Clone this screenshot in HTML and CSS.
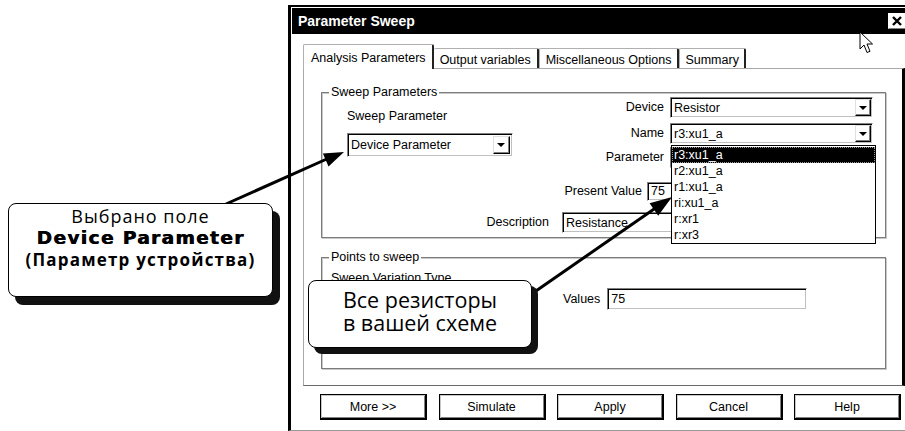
FILE: index.html
```html
<!DOCTYPE html>
<html lang="ru">
<head>
    <meta charset="UTF-8">
    <meta name="viewport" content="width=device-width, initial-scale=1.0">
    <title>Parameter Sweep</title>
    <link rel="stylesheet" href="styles.css">
</head>
<body>
<div class="page">
    <div class="dialog">
        <div class="titlebar">
            <span class="title">Parameter Sweep</span>
            <span class="close">
                <svg width="12" height="10" viewBox="0 0 12 10"><path d="M2 1 L10 9 M10 1 L2 9" stroke="#000" stroke-width="2.4"/></svg>
            </span>
        </div>

        <div class="tabs">
            <div class="tab active">Analysis Parameters</div>
            <div class="tab">Output variables</div>
            <div class="tab">Miscellaneous Options</div>
            <div class="tab summary">Summary</div>
        </div>

        <div class="panel">
            <div class="group sweep">
                <div class="legend">Sweep Parameters</div>
                <div class="sweep-top">
                    <div class="sweep-left">
                        <div class="caption">Sweep Parameter</div>
                        <div class="combo big"><span class="value">Device Parameter</span><span class="drop"></span></div>
                    </div>
                    <div class="sweep-right">
                        <div class="row r-device">
                            <span class="lbl">Device</span>
                            <div class="combo field"><span class="value">Resistor</span><span class="drop"></span></div>
                        </div>
                        <div class="row r-name">
                            <span class="lbl">Name</span>
                            <div class="combo field"><span class="value">r3:xu1_a</span><span class="drop"></span></div>
                        </div>
                        <div class="row r-param">
                            <span class="lbl">Parameter</span>
                            <div class="combo field"><span class="value"></span><span class="drop"></span></div>
                        </div>
                        <div class="row r-pv">
                            <span class="lbl">Present Value</span>
                            <div class="input pv">75</div>
                        </div>
                    </div>
                </div>
                <div class="row r-desc">
                    <span class="lbl">Description</span>
                    <div class="input desc">Resistance</div>
                </div>
            </div>

            <div class="group points">
                <div class="legend">Points to sweep</div>
                <div class="points-body">
                    <div class="pts-left">Sweep Variation Type</div>
                    <div class="row pts-values">
                        <span class="lbl">Values</span>
                        <div class="input values">75</div>
                    </div>
                </div>
            </div>
        </div>

        <div class="buttons">
            <div class="btn">More &gt;&gt;</div>
            <div class="btn">Simulate</div>
            <div class="btn">Apply</div>
            <div class="btn">Cancel</div>
            <div class="btn">Help</div>
        </div>
    </div>

    <!-- open list of the Name combo -->
    <ul class="droplist">
        <li class="selected">r3:xu1_a</li>
        <li>r2:xu1_a</li>
        <li>r1:xu1_a</li>
        <li>ri:xu1_a</li>
        <li>r:xr1</li>
        <li>r:xr3</li>
    </ul>

    <svg class="arrows" width="905" height="431" viewBox="0 0 905 431">
        <line x1="226" y1="204" x2="329" y2="158" stroke="#000" stroke-width="3"/>
        <polygon points="344,152 322.9,153.6 328.5,166.4" fill="#000"/>
        <line x1="533" y1="293" x2="657" y2="207" stroke="#000" stroke-width="3"/>
        <polygon points="672,197 649.6,203.3 658.2,215.7" fill="#000"/>
    </svg>

    <svg class="cursor" width="15" height="24" viewBox="0 0 15 24">
        <path d="M1 1 V18 L5 14 L8 21.5 L11 20.3 L8 13 H13.5 Z" fill="#fff" stroke="#000" stroke-width="1" stroke-linejoin="miter"/>
    </svg>

    <div class="callout callout-device">
        <div class="c-plain">Выбрано поле</div>
        <div class="c-heavy">Device Parameter</div>
        <div class="c-bold">(Параметр устройства)</div>
    </div>

    <div class="callout callout-res">
        <div>Все резисторы</div>
        <div>в вашей схеме</div>
    </div>
</div>
</body>
</html>
```

FILE: styles.css
```css
* {
    margin: 0;
    padding: 0;
    box-sizing: border-box;
}

body {
    background: #fff;
    font-family: "Liberation Sans", Arial, sans-serif;
    font-size: 12.5px;
    color: #000;
}

.page {
    position: relative;
    width: 905px;
    height: 431px;
    overflow: hidden;
    background: #fff;
}

/* janela do dialogo */
.dialog {
    margin: 5px 0 0 288px;
    width: 620px;
    height: 426px;
    border-left: 3px solid #000;
    border-top: 2px solid #000;
    border-bottom: 1px solid #999;
    padding-top: 1px;
    background: #fff;
}

.titlebar {
    margin-left: 1px;
    height: 26px;
    background: #000;
    color: #fff;
    display: flex;
    align-items: center;
    padding-left: 6px;
}

.title {
    font-weight: bold;
    font-size: 14px;
}

.close {
    margin-left: auto;
    margin-right: 2px;
    width: 18px;
    height: 16px;
    background: #fff;
    border: 1px solid;
    border-color: #fff #808080 #808080 #fff;
    display: flex;
    align-items: center;
    justify-content: center;
}

/* abas */
.tabs {
    display: flex;
    align-items: flex-end;
    margin-top: 10px;
    padding-left: 12px;
    height: 24px;
}

.tab {
    height: 20px;
    padding: 4px 6px 0;
    line-height: 15px;
    white-space: nowrap;
    background: #fff;
    border-top: 1px solid #b0b0b0;
    border-left: 1px solid #b0b0b0;
    border-right: 2px solid #222;
    border-radius: 2px 2px 0 0;
}

.tab.active {
    height: 25px;
    padding: 6px 6px 0 7px;
    margin-bottom: -1px;
    position: relative;
    z-index: 1;
}

.tab.active + .tab {
    border-left: 0;
}

.tab.summary {
    padding: 4px 5px 0;
}

.panel {
    margin-left: 12px;
    width: 602px;
    border: 1px solid #a8a8a8;
    border-right: 3px solid #000;
    border-bottom-color: #6a6a6a;
    background: #fff;
}

/* caixas de grupo */
.group {
    margin: 23px 16px 0 17px;
    border: 1px solid #7c7c7c;
    box-shadow: inset 1px 1px 0 #c8c8c8, 1px 1px 0 #c8c8c8;
}

.legend {
    width: fit-content;
    margin: -8px 0 -7px 7px;
    padding: 0 2px;
    background: #fff;
    line-height: 15px;
}

.sweep {
    padding-bottom: 4px;
}

.sweep-top {
    display: flex;
}

.sweep-left {
    width: 191px;
    padding: 16px 0 0 25px;
}

.caption {
    line-height: 15px;
}

.sweep-right {
    flex: 1;
    display: flex;
    flex-direction: column;
    align-items: flex-end;
    padding-right: 12px;
}

.row {
    display: flex;
    align-items: center;
}

.lbl {
    margin-right: 6px;
    line-height: 15px;
}

.r-device { margin-top: 4px; }
.r-name { margin-top: 5px; }
.r-param { margin-top: 3px; }
.r-pv { margin-top: 13px; height: 20px; }
.r-pv .lbl { margin-right: 5px; }

.r-desc {
    margin-top: 11px;
    justify-content: flex-end;
    padding-right: 12px;
}

.r-desc .lbl { margin-right: 13px; }

/* campos afundados estilo windows */
.combo,
.input {
    display: flex;
    align-items: center;
    background: #fff;
    border: 1px solid;
    border-color: #808080 #fff #fff #808080;
    box-shadow: inset 1px 1px 0 #000, inset -1px -1px 0 #c0c0c0;
    padding: 1px 1px 1px 3px;
    white-space: nowrap;
    overflow: hidden;
}

.combo .value {
    flex: 1;
}

.field {
    width: 203px;
    height: 21px;
}

.big {
    width: 166px;
    height: 24px;
    margin-top: 9px;
    padding-right: 2px;
}

.drop {
    width: 16px;
    height: 17px;
    flex: none;
    background: #fff;
    border: 1px solid;
    border-color: #e0e0e0 #000 #000 #e0e0e0;
    box-shadow: inset -1px -1px 0 #808080;
    display: flex;
    align-items: center;
    justify-content: center;
}

.big .drop {
    height: 18px;
    width: 17px;
}

.drop::after {
    content: "";
    border-top: 4px solid #000;
    border-left: 4px solid transparent;
    border-right: 4px solid transparent;
    margin-right: 1px;
}

.pv {
    width: 226px;
    height: 19px;
}

.desc {
    width: 311px;
    height: 21px;
}

.points {
    margin-top: 19px;
    margin-bottom: 16px;
    height: 112px;
}

.points-body {
    display: flex;
}

.pts-left {
    width: 241px;
    padding: 13px 0 0 9px;
    line-height: 15px;
}

.pts-values {
    margin-top: 30px;
    align-self: flex-start;
}

.pts-values .lbl { margin-right: 7px; }

.values {
    width: 200px;
    height: 22px;
}

/* botoes de baixo */
.buttons {
    display: flex;
    gap: 11.5px;
    margin-top: 8px;
    padding-left: 29px;
}

.btn {
    width: 107px;
    height: 26px;
    display: flex;
    align-items: center;
    justify-content: center;
    background: #fff;
    border: 1px solid #000;
    border-right-width: 2px;
    border-bottom-width: 2px;
    box-shadow: inset 1px 1px 0 #c8c8c8, inset -1px -1px 0 #808080;
}

/* lista aberta do combo Name */
.droplist {
    position: absolute;
    left: 671px;
    top: 145px;
    width: 205px;
    list-style: none;
    background: #fff;
    border: 1px solid #000;
    padding: 1px 0 0;
}

.droplist li {
    line-height: 16px;
    height: 16px;
    padding-left: 2px;
}

.droplist li.selected {
    background: #000;
    color: #fff;
    outline: 1px dotted #999;
    outline-offset: -1px;
}

.arrows {
    position: absolute;
    left: 0;
    top: 0;
}

.cursor {
    position: absolute;
    left: 859px;
    top: 31px;
}

/* baloes de comentario */
.callout {
    position: absolute;
    background: #fff;
    border: 1.5px solid #000;
    border-radius: 8px;
    text-align: center;
    color: #000;
    white-space: nowrap;
}

.callout-device {
    left: 8px;
    top: 203px;
    width: 265px;
    height: 94px;
    padding-top: 2px;
    box-shadow: 7px 8px 0 #111;
}

.c-plain {
    font: 18px/21px "Open Sans", sans-serif;
    letter-spacing: 1px;
}

/* linha pesada - engrossa com sombra de texto */
.c-heavy {
    font: bold 18.5px/21px "DejaVu Sans", sans-serif;
    letter-spacing: 1.4px;
    text-shadow: 0.7px 0 0 #000;
}

.c-bold {
    font: bold 17px/24px "Open Sans", sans-serif;
    letter-spacing: 1.2px;
}

.callout-res {
    left: 308px;
    top: 280px;
    width: 224px;
    height: 68px;
    padding-top: 6.5px;
    font: 21.5px/23px "Open Sans", sans-serif;
    box-shadow: 6px 6px 0 #111;
}
```
